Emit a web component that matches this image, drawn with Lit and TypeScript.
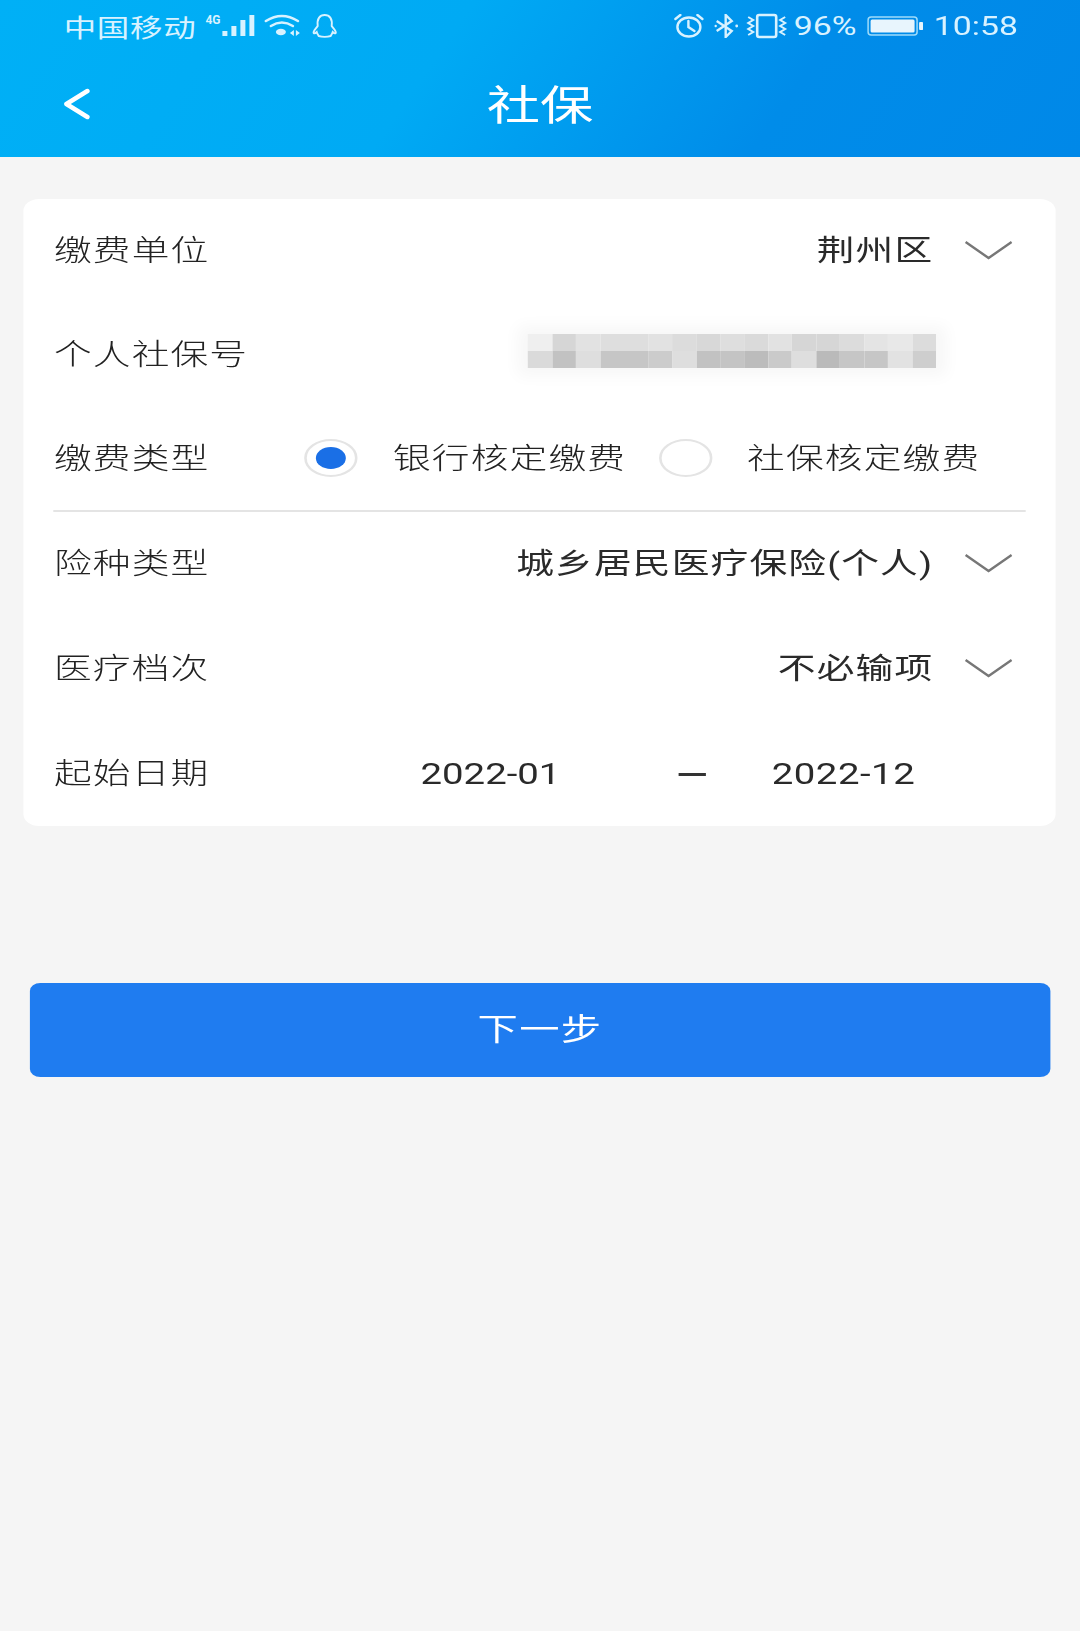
import { LitElement, html, css, svg } from "lit";
import { customElement } from "lit/decorators.js";

const S = 1.3;
const TOP = ["#efefef","#d6d6d6","#e2e2e2","#dedede","#dedede","#e2e2e2","#dcdcdc","#d8d8d8","#dedede","#dadada","#e2e2e2","#d6d6d6","#d6d6d6","#dcdcdc","#e4e4e4","#e8e8e8","#dcdcdc"];
const BOT = ["#dadada","#c2c2c2","#dedede","#c6c6c6","#c6c6c6","#cccccc","#dedede","#c2c2c2","#c4c4c4","#bcbcbc","#cacaca","#dedede","#bababa","#c6c6c6","#c6c6c6","#e2e2e2","#cecece"];

const icon = (w: number, h: number, body: unknown) => html`<svg class="ic" style="width:${w / S}px;height:${h}px" viewBox="0 0 ${w} ${h}" preserveAspectRatio="none">${body}</svg>`;

const chevron = () => html`<span class="chev">${icon(48, 20, svg`<path d="M1 2 L24 18 L47 2" fill="none" stroke="#777" stroke-width="2.4"/>`)}</span>`;
const back = () => icon(28, 32, svg`<path d="M25 3 L4 16 L25 29" fill="none" stroke="#fff" stroke-width="4.500" stroke-linecap="round" stroke-linejoin="round"/>`);

const signal = () => icon(50, 26, svg`
  <text x="0" y="11" font-size="12" font-weight="700" fill="#d8f2ff" font-family="Roboto, sans-serif">4G</text>
  <g fill="#d8f2ff">
    <rect x="17" y="18" width="5" height="5"/>
    <rect x="26" y="13" width="5" height="10"/>
    <rect x="35" y="7" width="5" height="16"/>
    <rect x="44" y="2" width="5" height="21"/>
  </g>`);
const wifi = () => icon(37, 24, svg`
  <g fill="none" stroke="#d8f2ff" stroke-width="2.600" stroke-linecap="round">
    <path d="M2 7 Q18 -3 34 7"/><path d="M7 12 Q18 5 29 12"/>
  </g>
  <ellipse cx="17" cy="18" rx="5" ry="3.200" fill="#d8f2ff"/>
  <path d="M26 19 l4 -3 v6z M36 19 l-4 -3 v6z" fill="#d8f2ff"/>`);
const qq = () => icon(28, 24, svg`<path d="M7 12 C6 5 9 1 14 1 C19 1 22 5 21 12 C23 15 26 17 25 19 C24 20 22.500 18.500 22 18 C21.500 20 20.500 21 20 22 C17 23 11 23 8 22 C7.500 21 6.500 20 6 18 C5.500 18.500 4 20 3 19 C2 17 5 15 7 12 Z" fill="none" stroke="#d8f2ff" stroke-width="1.900"/>`);
const alarm = () => icon(31, 24, svg`
  <ellipse cx="15.500" cy="13" rx="11.500" ry="9.500" fill="none" stroke="#d8f2ff" stroke-width="2.400"/>
  <path d="M15 7 V13 L21 17 M2 5 L7 1 M29 5 L24 1" fill="none" stroke="#d8f2ff" stroke-width="2.400" stroke-linecap="round"/>`);
const bt = () => icon(25, 24, svg`
  <path d="M3 7 L18 17 L12 23 V1 L18 7 L3 17" fill="none" stroke="#d8f2ff" stroke-width="2.400"/>
  <circle cx="23" cy="12" r="1.400" fill="#d8f2ff"/><circle cx="2" cy="12" r="1.200" fill="#d8f2ff"/>`);
const vibrate = () => icon(42, 26, svg`
  <rect x="11" y="2" width="19" height="22" rx="2" fill="none" stroke="#d8f2ff" stroke-width="2.600"/>
  <path d="M2 4 L7 7 L2 10 L7 13 L2 16 L7 19 L2 22 M39 4 L34 7 L39 10 L34 13 L39 16 L34 19 L39 22" fill="none" stroke="#d8f2ff" stroke-width="2"/>`);
const battery = () => icon(56, 20, svg`
  <rect x="1" y="1" width="49" height="18" rx="3" fill="none" stroke="#9fdcfa" stroke-width="1.500"/>
  <rect x="3.500" y="3.500" width="44" height="13" rx="1.500" fill="#e8f5fd"/>
  <rect x="52" y="6" width="4" height="8" rx="1" fill="#e8f5fd"/>`);

@customElement("app-root")
export class AppRoot extends LitElement {
  static styles = css`
    :host { display: block; width: 1080px; height: 1631px; overflow: hidden; background: #f5f5f5; }
    .page {
      width: 830.77px; height: 1631px; transform: scaleX(1.3); transform-origin: 0 0;
      font-family: Roboto, "Noto Sans CJK SC", sans-serif; display: flex; flex-direction: column;
    }
    .ic { display: block; flex: none; }
    header {
      height: 157px; flex: none; display: flex; flex-direction: column;
      background: linear-gradient(118deg, #00b0f6 0%, #00aaf4 40%, #008ce9 72%, #0088e8 100%);
      color: #fff;
    }
    .status { height: 52px; display: flex; align-items: center; justify-content: space-between; padding: 0 47.7px 0 49px; color: #d8f2ff; }
    .group { display: flex; align-items: center; }
    .carrier { font-size: 25px; width: 107px; margin-right: 2px; letter-spacing: 0.5px; }
    .g1 { margin-right: 7px; }
    .g2 { margin-right: 7px; }
    .r0 { margin-right: 7px; }
    .r1 { margin-right: 6px; }
    .r2 { margin-right: 4px; }
    .pct { font-size: 26px; width: 48px; margin-right: 8px; white-space: nowrap; }
    .time { font-size: 26px; width: 65px; margin-left: 8.5px; text-align: right; }
    .nav { height: 105px; position: relative; display: flex; align-items: center; justify-content: center; padding-top: 4px; box-sizing: border-box; }
    .back { position: absolute; left: 48px; top: 36px; }
    .title { font-size: 41px; line-height: 1; letter-spacing: 0; }

    .card {
      margin: 42px 18.46px 0; height: 627px; background: #fff; border-radius: 12px;
      flex: none; display: flex; flex-direction: column; color: #2a2a2a;
    }
    .row { height: 104.6px; flex: none; display: flex; align-items: center; padding: 8px 33px 0 23px; font-size: 29px; line-height: 1; letter-spacing: 0.9px; position: relative; box-sizing: border-box; }
    .row:first-child { height: 100px; padding-top: 4px; }
    .row:last-child { height: 106px; }
    .label { color: #222; flex: none; width: 118px; white-space: nowrap; font-weight: 300; }
    .value { margin-left: auto; margin-right: 24.5px; white-space: nowrap; }
    .chev { margin-top: -3px; flex: none; }
    .sep { border-bottom: 2px solid #e4e4e4; margin: 2px 0 -4px 23px; height: 0; flex: none; position: relative; width: 747.7px; }

    .mosaic { position: relative; margin-left: 247px; margin-top: -8px; display: grid; grid-template-columns: repeat(17, 18.46px); grid-auto-rows: 17px; box-shadow: 0 0 14px 8px rgba(0,0,0,0.035); }

    .radio { width: 41.5px; height: 38px; margin-top: -4px; border-radius: 50%; border: 2px solid #e4e4e4; box-sizing: border-box; display: flex; align-items: center; justify-content: center; flex: none; }
    .radio.first { margin-left: 74.3px; }
    .dot { width: 23.5px; height: 22px; border-radius: 50%; background: #1a6fe6; }
    .opt { margin: 0 25px 0 27px; white-space: nowrap; font-weight: 300; color: #222; }
    .opt.last { margin-right: 0; margin-left: 26.5px; }

    .date { letter-spacing: 0; color: #2a2a2a; white-space: nowrap; font-size: 29.5px; }
    .d1 { margin-left: 164px; }
    .dash { width: 21px; height: 2.5px; background: #333; margin-left: 90.5px; flex: none; }
    .d2 { margin-left: 51px; letter-spacing: 0.4px; }

    .btn {
      margin: 157px 23px 0; height: 94px; background: #1f7cf0; border-radius: 8px; border: none; padding: 0 0 8px;
      color: #fff; font: inherit; font-size: 31px; letter-spacing: 1px; display: flex; align-items: center; justify-content: center; flex: none;
    }
  `;

  render() {
    return html`<div class="page">
      <header>
        <div class="status">
          <div class="group">
            <span class="carrier">中国移动</span>
            <span class="g1">${signal()}</span>
            <span class="g2">${wifi()}</span>
            ${qq()}
          </div>
          <div class="group">
            <span class="r0">${alarm()}</span>
            <span class="r1">${bt()}</span>
            <span class="r2">${vibrate()}</span>
            <span class="pct">96%</span>
            ${battery()}
            <span class="time">10:58</span>
          </div>
        </div>
        <div class="nav">
          <span class="back">${back()}</span>
          <span class="title">社保</span>
        </div>
      </header>

      <section class="card">
        <div class="row"><span class="label">缴费单位</span><span class="value">荆州区</span>${chevron()}</div>
        <div class="row"><span class="label">个人社保号</span>
          <div class="mosaic">
            ${TOP.map((c) => html`<i style="background:${c}"></i>`)}
            ${BOT.map((c) => html`<i style="background:${c}"></i>`)}
          </div>
        </div>
        <div class="row"><span class="label">缴费类型</span>
          <span class="radio first"><span class="dot"></span></span>
          <span class="opt">银行核定缴费</span>
          <span class="radio"></span>
          <span class="opt last">社保核定缴费</span>
        </div>
        <div class="sep"></div>
        <div class="row"><span class="label">险种类型</span><span class="value">城乡居民医疗保险(个人)</span>${chevron()}</div>
        <div class="row"><span class="label">医疗档次</span><span class="value">不必输项</span>${chevron()}</div>
        <div class="row"><span class="label">起始日期</span>
          <span class="date d1">2022-01</span><span class="dash"></span><span class="date d2">2022-12</span>
        </div>
      </section>

      <button class="btn">下一步</button>
    </div>`;
  }
}
